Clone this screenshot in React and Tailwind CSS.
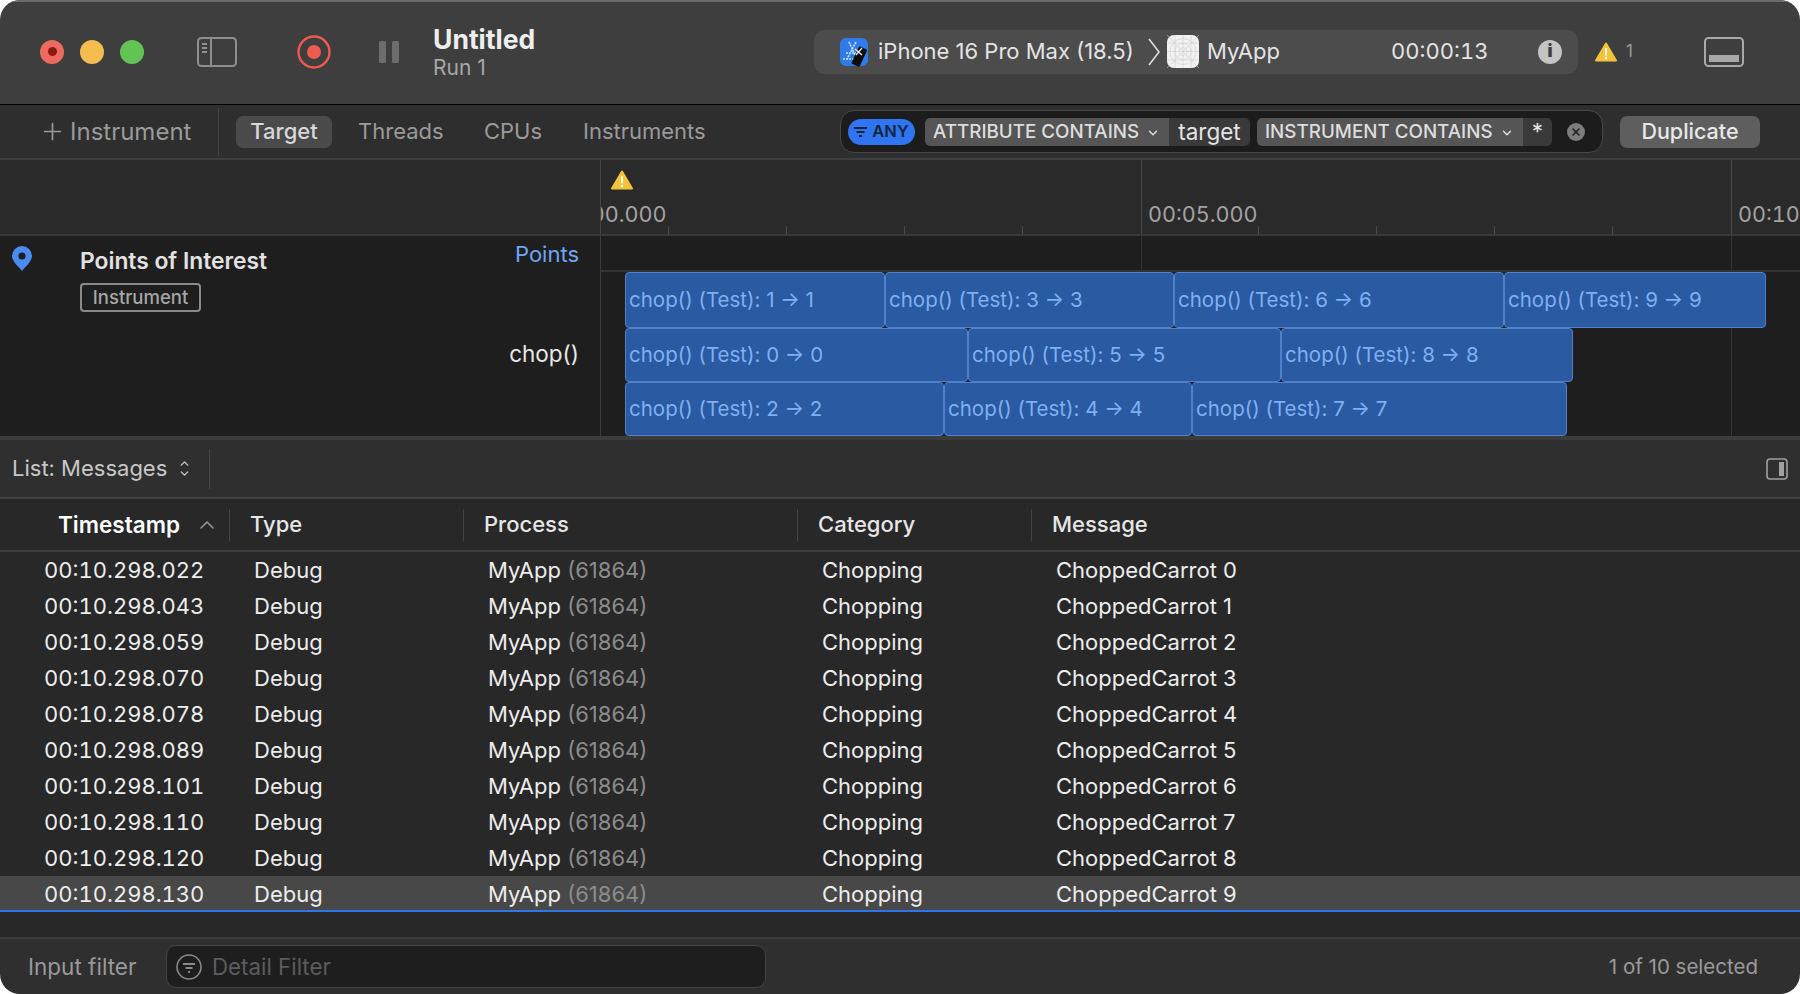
import { ChevronDown, ChevronUp, Plus, X } from "lucide-react";

const rows = [
  ["00:10.298.022", "ChoppedCarrot 0"],
  ["00:10.298.043", "ChoppedCarrot 1"],
  ["00:10.298.059", "ChoppedCarrot 2"],
  ["00:10.298.070", "ChoppedCarrot 3"],
  ["00:10.298.078", "ChoppedCarrot 4"],
  ["00:10.298.089", "ChoppedCarrot 5"],
  ["00:10.298.101", "ChoppedCarrot 6"],
  ["00:10.298.110", "ChoppedCarrot 7"],
  ["00:10.298.120", "ChoppedCarrot 8"],
  ["00:10.298.130", "ChoppedCarrot 9"],
];

const lanes = [
  { cls: "h-[56px]", bars: [[260, "1 → 1"], [289, "3 → 3"], [330, "6 → 6"], [262, "9 → 9"]] },
  { cls: "h-[54px]", bars: [[343, "0 → 0"], [313, "5 → 5"], [292, "8 → 8"]] },
  { cls: "h-[54px]", bars: [[319, "2 → 2"], [248, "4 → 4"], [375, "7 → 7"]] },
];

const minorTicks = [67, 185, 303, 421, 657, 775, 893, 1011];

function AppIcon() {
  return (
    <svg width="30" height="30" viewBox="0 0 30 30" className="shrink-0">
      <rect x="1" y="1" width="28" height="28" rx="6" fill="#2f7bea" />
      <path d="M4 22h15M10 5l8 17M17 5l-9 17M7 16h12" stroke="#cfe2fb" strokeWidth="1.6" fill="none" strokeDasharray="2 1" />
      <rect x="16" y="10" width="9" height="19" rx="1.5" fill="#0c0c0c" transform="rotate(25 20 19)" />
      <path d="M16 12l7 6M23 11l-6 7" stroke="#eee" strokeWidth="1.3" />
    </svg>
  );
}

function MyAppIcon() {
  return (
    <svg width="32" height="33" viewBox="0 0 32 33" className="shrink-0">
      <rect width="32" height="33" rx="7" fill="#f2f2f2" />
      <g stroke="#cfcfcf" strokeWidth="0.6" fill="none">
        <circle cx="16" cy="16.5" r="13" />
        <circle cx="16" cy="16.5" r="8" />
        <circle cx="16" cy="16.5" r="4" />
        <path d="M0 0l32 33M32 0L0 33M16 0v33M0 16.5h32M8 0v33M24 0v33M0 8h32M0 25h32" />
      </g>
    </svg>
  );
}

function Warning({ w = 22, h = 20 }) {
  return (
    <svg width={w} height={h} viewBox="0 0 22 20" className="shrink-0">
      <path d="M11 1.5L21 18.5H1Z" fill="#f5c33b" stroke="#f5c33b" strokeWidth="2" strokeLinejoin="round" />
      <rect x="10" y="6" width="2" height="7.5" rx="1" fill="#fff" />
      <circle cx="11" cy="16" r="1.3" fill="#fff" />
    </svg>
  );
}

function TitleBar() {
  return (
    <div className="flex h-[105px] items-center border-b border-black bg-[#3e3e3e] border-t-2 border-t-[#6b6b6b] pb-[3px]">
      <div className="ml-[40px] flex gap-[16px]">
        <span className="flex h-[24px] w-[24px] items-center justify-center rounded-full bg-[#ee6a5f]">
          <span className="h-[9px] w-[9px] rounded-full bg-[#8c1a10]" />
        </span>
        <span className="h-[24px] w-[24px] rounded-full bg-[#f5bd4f]" />
        <span className="h-[24px] w-[24px] rounded-full bg-[#61c454]" />
      </div>
      <svg width="40" height="30" viewBox="0 0 40 30" className="ml-[53px]" fill="none" stroke="#8e8e8e" strokeWidth="2">
        <rect x="1" y="1" width="38" height="28" rx="3.5" />
        <path d="M14 1v28" />
        <path d="M5 7h5M5 11h5M5 15h5" />
      </svg>
      <svg width="34" height="34" viewBox="0 0 34 34" className="ml-[60px]">
        <circle cx="17" cy="17" r="15.5" fill="none" stroke="#ed5b4f" strokeWidth="2.4" />
        <circle cx="17" cy="17" r="7" fill="#ed5b4f" />
      </svg>
      <div className="ml-[48px] flex gap-[6px]">
        <span className="h-[22px] w-[7px] rounded-[1.5px] bg-[#6d6d6d]" />
        <span className="h-[22px] w-[7px] rounded-[1.5px] bg-[#6d6d6d]" />
      </div>
      <div className="ml-[34px] flex w-[381px] flex-col">
        <span className="text-[26.5px] leading-[31px] font-bold text-[#eeeeee]">Untitled</span>
        <span className="mt-[1px] text-[21px] leading-[24px] text-[#a8a8a8]">Run 1</span>
      </div>
      <div className="flex h-[44px] w-[764px] items-center rounded-[10px] bg-[#4c4c4c] pl-[25px] text-[22px] text-[#e4e4e4]">
        <AppIcon />
        <span className="ml-[9px] w-[259px] whitespace-nowrap">iPhone 16 Pro Max (18.5)</span>
        <svg width="12" height="28" viewBox="0 0 12 28" className="ml-[11px]" fill="none" stroke="#dcdcdc" strokeWidth="1.6">
          <path d="M1 1l10 13L1 27" />
        </svg>
        <span className="ml-[7px]"><MyAppIcon /></span>
        <span className="ml-[8px] w-[184px]">MyApp</span>
        <span className="w-[147px] tabular-nums">00:00:13</span>
        <span className="flex h-[24px] w-[24px] items-center justify-center rounded-full bg-[#c4c4c4] text-[17px] leading-none font-black text-[#3e3e3e]">i</span>
      </div>
      <span className="ml-[17px]"><Warning /></span>
      <span className="ml-[9px] text-[17px] text-[#9b9b9b]">1</span>
      <svg width="40" height="30" viewBox="0 0 40 30" className="ml-[71px]" fill="none" stroke="#a8a8a8" strokeWidth="2">
        <rect x="1" y="1" width="38" height="28" rx="3.5" />
        <rect x="5" y="18" width="30" height="7" fill="#a8a8a8" stroke="none" />
      </svg>
    </div>
  );
}

function Chip({ label, value, labelW, valueW }) {
  return (
    <div className="flex h-[28px] overflow-hidden rounded-[5px]">
      <span className={`flex items-center gap-[7px] bg-[#555555] pt-[2px] pl-[8px] text-[18.8px] font-medium text-[#dddddd] whitespace-nowrap ${labelW}`}>
        {label}
        <ChevronDown size={14} strokeWidth={2.5} />
      </span>
      <span className={`flex items-center justify-center bg-[#3a3a3a] text-[22.5px] text-[#e4e4e4] ${valueW}`}>{value}</span>
    </div>
  );
}

function FilterBar() {
  return (
    <div className="flex h-[55px] items-center border-b-2 border-[#3f3f3f] bg-[#2e2e2e]">
      <div className="flex w-[219px] items-center border-r border-[#444444] py-[2px] pl-[39px] text-[24px] leading-[44px] text-[#9a9a9a]">
        <Plus size={27} strokeWidth={1.5} />
        <span className="ml-[4px]">Instrument</span>
      </div>
      <div className="ml-[17px] flex items-center text-[22px] text-[#9a9a9a]">
        <span className="flex h-[32px] w-[96px] items-center justify-center rounded-[7px] bg-[#4a4a4a] font-medium text-[#d8d8d8]">Target</span>
        <span className="ml-[26px] w-[126px]">Threads</span>
        <span className="w-[99px]">CPUs</span>
        <span className="w-[257px]">Instruments</span>
      </div>
      <div className="flex h-[43px] w-[763px] items-center rounded-[14px] border border-[#484848] bg-[#1c1c1c] pl-[7px]">
        <span className="flex h-[26px] w-[67px] items-center justify-center gap-[5px] rounded-full bg-[#2f74f0] text-[16.5px] font-semibold text-[#14233f]">
          <svg width="13" height="12" viewBox="0 0 13 12" stroke="#14233f" strokeWidth="2">
            <path d="M0 2h13M2.5 6h8M5 10h3" />
          </svg>
          ANY
        </span>
        <span className="ml-[10px]"><Chip label="ATTRIBUTE CONTAINS" value="target" labelW="w-[244px]" valueW="w-[81px]" /></span>
        <span className="ml-[7px]"><Chip label="INSTRUMENT CONTAINS" value="*" labelW="w-[266px]" valueW="w-[29px]" /></span>
        <span className="ml-[15px] flex h-[18px] w-[18px] items-center justify-center rounded-full bg-[#7d7d7d] text-[#1c1c1c]">
          <X size={12} strokeWidth={3} />
        </span>
      </div>
      <span className="ml-[17px] flex h-[32px] w-[140px] items-center justify-center rounded-[7px] bg-[#5e5e5e] text-[21.5px] font-medium text-[#e8e8e8]">Duplicate</span>
    </div>
  );
}

function Ruler() {
  return (
    <div className="flex h-[76px] border-b-2 border-[#3a3a3a] bg-[#2a2a2a]">
      <div className="w-[601px] border-r border-[#444444]" />
      <div className="relative flex-1 overflow-hidden">
        <span className="absolute top-[10px] left-[10px]"><Warning /></span>
        <span className="absolute top-[38px] left-[-44px] text-[21.6px] text-[#a3a3a3] tabular-nums">00:00.000</span>
        <span className="absolute top-[38px] left-[547px] text-[21.6px] text-[#a3a3a3] tabular-nums">00:05.000</span>
        <span className="absolute top-[38px] left-[1137px] text-[21.6px] text-[#a3a3a3] tabular-nums">00:10.000</span>
        <span className="absolute top-0 bottom-0 left-[540px] w-px bg-[#4a4a4a]" />
        <span className="absolute top-0 bottom-0 left-[1130px] w-px bg-[#4a4a4a]" />
        {minorTicks.map((x) => (
          <span key={x} className="absolute bottom-0 h-[8px] w-px bg-[#4a4a4a]" style={{ left: x }} />
        ))}
      </div>
    </div>
  );
}

function Track() {
  return (
    <div className="flex h-[204px] border-b-4 border-[#3c3c3c] bg-[#1e1e1e]">
      <div className="relative w-[601px] border-r border-[#3c3c3c] pt-[10px]">
        <div className="flex">
          <svg width="22" height="26" viewBox="0 0 22 26" className="ml-[11px]">
            <path d="M11 25C6 19 1 15 1 10a10 10 0 0 1 20 0c0 5-5 9-10 15Z" fill="#4b8af0" />
            <circle cx="11" cy="10" r="3.6" fill="#1e1e1e" />
          </svg>
          <div className="ml-[47px] flex flex-col items-start">
            <span className="text-[22.8px] leading-[30px] font-semibold text-[#e2e2e2]">Points of Interest</span>
            <span className="mt-[7px] flex h-[29px] w-[121px] items-center justify-center rounded-[4px] border-2 border-[#8a8a8a] text-[18.5px] font-medium text-[#a6a6a6]">Instrument</span>
          </div>
        </div>
        <span className="absolute top-[2px] right-[21px] text-[22px] text-[#6ea6f2]">Points</span>
        <span className="absolute top-[101px] right-[21px] text-[22.5px] text-[#e8e8e8]">chop()</span>
      </div>
      <div className="relative flex-1">
        <span className="absolute top-0 bottom-0 left-[540px] w-px bg-[#333333]" />
        <span className="absolute top-0 bottom-0 left-[1130px] w-px bg-[#333333]" />
        <div className="h-[36px] border-b-2 border-[#333333]" />
        <div className="relative flex flex-col pl-[24px]">
          {lanes.map((lane, i) => (
            <div key={i} className={`flex ${lane.cls}`}>
              {lane.bars.map(([w, label]) => (
                <div
                  key={label}
                  className="flex shrink-0 items-center overflow-hidden rounded-[4px] border border-[#5080c8] bg-[#2a5aa2] pl-[3px] text-[20.5px] whitespace-nowrap text-[#7fb0f2]"
                  style={{ width: w }}
                >
                  chop() (Test): {label}
                </div>
              ))}
            </div>
          ))}
        </div>
      </div>
    </div>
  );
}

function ListBar() {
  return (
    <div className="flex h-[59px] items-center border-b-2 border-[#414141] bg-[#2f2f2f]">
      <div className="flex h-[40px] w-[210px] items-center border-r border-[#444444] pl-[12px] text-[22px] text-[#c8c8c8]">
        List: Messages
        <span className="ml-[11px] flex flex-col -space-y-[3px]">
          <ChevronUp size={13} strokeWidth={2.5} />
          <ChevronDown size={13} strokeWidth={2.5} />
        </span>
      </div>
      <svg width="22" height="22" viewBox="0 0 22 22" className="mr-[12px] ml-auto" fill="none" stroke="#a0a0a0" strokeWidth="1.6">
        <rect x="1" y="1" width="20" height="20" rx="3" />
        <rect x="13" y="4" width="5" height="14" fill="#a0a0a0" stroke="none" />
      </svg>
    </div>
  );
}

function Table() {
  const grid = "grid grid-cols-[229px_234px_334px_234px_1fr]";
  const headCell = "flex h-[32px] items-center border-l border-[#444444] pl-[20px]";
  return (
    <div className="flex-1 bg-[#282828]">
      <div className={`${grid} h-[53px] items-center border-b-2 border-[#3c3c3c] text-[22px] font-medium text-[#e6e6e6]`}>
        <div className="flex items-center pl-[58px] text-[22.5px] font-semibold text-white">
          Timestamp
          <ChevronUp size={24} strokeWidth={1.5} className="ml-[15px] text-[#9a9a9a]" />
        </div>
        <div className={headCell}>Type</div>
        <div className={headCell}>Process</div>
        <div className={headCell}>Category</div>
        <div className={headCell}>Message</div>
      </div>
      {rows.map(([time, message], i) => (
        <div
          key={time}
          className={`${grid} h-[36px] items-center text-[22px] text-[#ededed] ${i === 9 ? "border-b-2 border-[#2f74e8] bg-[#484848] pt-[2px]" : ""}`}
        >
          <div className="pl-[44px] tabular-nums">{time}</div>
          <div className="pl-[25px]">Debug</div>
          <div className="pl-[25px]">
            MyApp <span className="text-[#8c8c8c]">(61864)</span>
          </div>
          <div className="pl-[25px]">Chopping</div>
          <div className="pl-[25px]">{message}</div>
        </div>
      ))}
    </div>
  );
}

function Footer() {
  return (
    <div className="flex h-[57px] items-center border-t-2 border-[#3c3c3c] bg-[#2f2f2f]">
      <span className="ml-[28px] w-[138px] text-[22.5px] text-[#999999]">Input filter</span>
      <div className="flex h-[43px] w-[600px] items-center rounded-[10px] border border-[#444444] bg-[#1e1e1e] pl-[9px] text-[22.3px] text-[#5c5c5c]">
        <svg width="26" height="26" viewBox="0 0 26 26" fill="none" stroke="#8a8a8a" strokeWidth="1.6">
          <circle cx="13" cy="13" r="12" />
          <path d="M7 10h12M9.5 14h7M12 18h2" strokeWidth="2" />
        </svg>
        <span className="ml-[10px]">Detail Filter</span>
      </div>
      <span className="mr-[42px] ml-auto pt-[1px] text-[20.5px] text-[#9a9a9a]">1 of 10 selected</span>
    </div>
  );
}

export default function App() {
  return (
    <div className="h-[994px] w-[1800px] overflow-hidden bg-white font-['Inter','Liberation_Sans',sans-serif] antialiased">
      <div className="flex h-full flex-col overflow-hidden rounded-[20px]">
        <TitleBar />
        <FilterBar />
        <Ruler />
        <Track />
        <ListBar />
        <Table />
        <Footer />
      </div>
    </div>
  );
}
